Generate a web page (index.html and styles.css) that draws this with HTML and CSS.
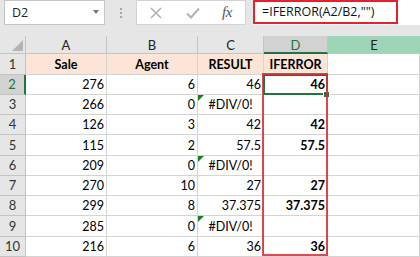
FILE: index.html
```html
<!DOCTYPE html>
<html>
<head>
<meta charset="utf-8">
<link rel="stylesheet" href="styles.css">
</head>
<body>
<div class="app">
  <div class="fbar">
    <div class="namebox"><span class="nb-text">D2</span><span class="nb-arrow"></span></div>
    <div class="dots"><i></i><i></i><i></i></div>
    <div class="btns">
      <svg class="ic-x" width="12" height="12" viewBox="0 0 12 12"><path d="M1 1 L11 11 M11 1 L1 11" stroke="#b3b3b3" stroke-width="1.6" fill="none"/></svg>
      <svg class="ic-ok" width="14" height="12" viewBox="0 0 14 12"><path d="M1 6.5 L5 10.5 L13 1.5" stroke="#b3b3b3" stroke-width="2" fill="none"/></svg>
      <span class="fx">fx</span>
    </div>
    <div class="finput"><div class="fbox">=IFERROR(A2/B2,"")</div></div>
  </div>
  <div class="sheet">
    <div class="ch corner"><span class="tri"></span></div>
    <div class="ch">A</div>
    <div class="ch">B</div>
    <div class="ch">C</div>
    <div class="ch sel">D</div>
    <div class="ch hov">E</div>

    <div class="rh">1</div>
    <div class="c hd">Sale</div>
    <div class="c hd">Agent</div>
    <div class="c hd">RESULT</div>
    <div class="c hd">IFERROR</div>
    <div class="c"></div>

    <div class="rh rsel">2</div>
    <div class="c n">276</div>
    <div class="c n">6</div>
    <div class="c n">46</div>
    <div class="c n b">46</div>
    <div class="c"></div>

    <div class="rh">3</div>
    <div class="c n">266</div>
    <div class="c n">0</div>
    <div class="c err"><span class="flag"></span>#DIV/0!</div>
    <div class="c n b"></div>
    <div class="c"></div>

    <div class="rh">4</div>
    <div class="c n">126</div>
    <div class="c n">3</div>
    <div class="c n">42</div>
    <div class="c n b">42</div>
    <div class="c"></div>

    <div class="rh">5</div>
    <div class="c n">115</div>
    <div class="c n">2</div>
    <div class="c n">57.5</div>
    <div class="c n b">57.5</div>
    <div class="c"></div>

    <div class="rh">6</div>
    <div class="c n">209</div>
    <div class="c n">0</div>
    <div class="c err"><span class="flag"></span>#DIV/0!</div>
    <div class="c n b"></div>
    <div class="c"></div>

    <div class="rh">7</div>
    <div class="c n">270</div>
    <div class="c n">10</div>
    <div class="c n">27</div>
    <div class="c n b">27</div>
    <div class="c"></div>

    <div class="rh">8</div>
    <div class="c n">299</div>
    <div class="c n">8</div>
    <div class="c n">37.375</div>
    <div class="c n b">37.375</div>
    <div class="c"></div>

    <div class="rh">9</div>
    <div class="c n">285</div>
    <div class="c n">0</div>
    <div class="c err"><span class="flag"></span>#DIV/0!</div>
    <div class="c n b"></div>
    <div class="c"></div>

    <div class="rh">10</div>
    <div class="c n">216</div>
    <div class="c n">6</div>
    <div class="c n">36</div>
    <div class="c n b">36</div>
    <div class="c"></div>
  </div>
  <div class="selbox"></div>
  <div class="handle"></div>
  <div class="redbox"></div>
</div>
</body>
</html>
```
FILE: styles.css
```css
html, body {
  margin: 0;
  padding: 0;
}
body {
  width: 420px;
  height: 257px;
  overflow: hidden;
  background: #ffffff;
  font-family: "Lato", "Liberation Sans", sans-serif;
  color: #000;
}
.app {
  position: relative;
  width: 420px;
  height: 257px;
}
.fbar {
  height: 36px;
  background: #e6e6e6;
  display: flex;
  align-items: flex-start;
  padding-left: 4px;
  box-sizing: border-box;
}
.namebox {
  width: 101px;
  height: 25px;
  box-sizing: border-box;
  background: #fff;
  border: 1px solid #c6c6c6;
  display: flex;
  align-items: center;
  justify-content: space-between;
  padding: 0 5px 0 7px;
}
.nb-text {
  font-family: "Open Sans", sans-serif;
  font-size: 12.5px;
  color: #222;
}
.nb-arrow {
  width: 0;
  height: 0;
  border-left: 3.5px solid transparent;
  border-right: 3.5px solid transparent;
  border-top: 4px solid #777;
  margin-top: -2px;
}
.dots {
  width: 31px;
  height: 25px;
  display: flex;
  flex-direction: column;
  align-items: center;
  justify-content: center;
  gap: 2px;
}
.dots i {
  display: block;
  width: 2px;
  height: 2px;
  background: #a6a6a6;
}
.btns {
  width: 110px;
  height: 25px;
  box-sizing: border-box;
  background: #fff;
  border: 1px solid #d4d4d4;
  display: flex;
  align-items: center;
  padding-left: 13px;
}
.ic-x { margin-right: 24px; }
.ic-ok { margin-right: 22px; }
.fx {
  font-family: "Liberation Serif", serif;
  font-style: italic;
  font-size: 15px;
  color: #555;
  letter-spacing: -0.5px;
}
.finput {
  margin-left: 7px;
  flex: 1;
  height: 25px;
  background: #fff;
}
.fbox {
  width: 145px;
  height: 24px;
  box-sizing: border-box;
  border: 2px solid #e3222d;
  font-family: "Open Sans", sans-serif;
  font-size: 12.5px;
  color: #111;
  padding-left: 7px;
  line-height: 20px;
  white-space: nowrap;
}
.sheet {
  display: grid;
  grid-template-columns: 26px 81px 91px 66px 64px 92px;
  grid-template-rows: 18px 21px 20px 20px 20px 21px 20px 20px 20px 21px 20px;
  font-size: 12.5px;
}
.ch {
  background: #e6e6e6;
  border-right: 1px solid #c4c4c4;
  border-bottom: 1px solid #c4c4c4;
  box-sizing: border-box;
  display: flex;
  align-items: center;
  justify-content: center;
  color: #222;
  font-size: 13px;
  padding-top: 1px;
}
.ch.corner {
  position: relative;
  justify-content: flex-end;
  align-items: flex-end;
  padding: 0 2px 2px 0;
}
.tri {
  width: 0;
  height: 0;
  border-left: 11px solid transparent;
  border-bottom: 11px solid #b4b4b4;
}
.ch.sel {
  background: #d2d2d2;
  color: #217346;
  border-bottom: 2px solid #217346;
}
.ch.hov {
  background: #9fd5b7;
  border-right: none;
}
.rh {
  background: #e6e6e6;
  border-right: 1px solid #c4c4c4;
  border-bottom: 1px solid #c4c4c4;
  box-sizing: border-box;
  display: flex;
  align-items: flex-end;
  justify-content: center;
  padding-bottom: 2px;
  line-height: 15px;
  color: #333;
  font-size: 13px;
}
.rh.rsel {
  background: #d2d2d2;
  color: #217346;
  border-right: 2px solid #217346;
}
.c {
  position: relative;
  border-right: 1px solid #d4d4d4;
  border-bottom: 1px solid #d4d4d4;
  box-sizing: border-box;
  display: flex;
  align-items: flex-end;
  line-height: 15px;
  padding: 0 2px 2px 2px;
  white-space: nowrap;
  overflow: visible;
}
.c.hd {
  background: #fce4d6;
  font-weight: bold;
  justify-content: center;
}
.c.n { justify-content: flex-end; }
.c.b { font-weight: bold; }
.c.err { justify-content: center; }
.flag {
  position: absolute;
  left: 0;
  top: 0;
  width: 0;
  height: 0;
  border-top: 6px solid #1e7d22;
  border-right: 6px solid transparent;
}
.selbox {
  position: absolute;
  left: 263px;
  top: 74px;
  width: 65px;
  height: 21px;
  box-sizing: border-box;
  border: 2px solid #217346;
}
.handle {
  position: absolute;
  left: 324px;
  top: 92px;
  width: 5px;
  height: 5px;
  background: #217346;
  border: 1px solid #fff;
  box-sizing: content-box;
  margin: -1px 0 0 -1px;
}
.redbox {
  position: absolute;
  left: 262px;
  top: 73px;
  width: 66px;
  height: 183px;
  box-sizing: border-box;
  border: 2px solid rgba(222, 40, 50, 0.85);
}
```
